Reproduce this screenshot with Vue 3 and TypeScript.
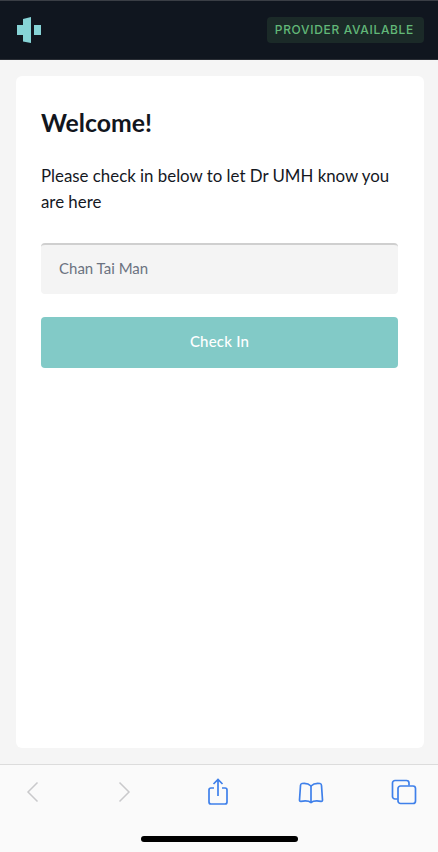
<template>
  <div class="page">
    <header class="topbar">
      <svg class="logo" width="26" height="28" viewBox="0 0 26 28">
        <path d="M15 1 L7 3 V9 H1 V19 H7 V25.500 L15 27 Z" fill="#86d3d6" />
        <rect x="18" y="9" width="7" height="10" fill="#86d3d6" />
      </svg>
      <span class="status">PROVIDER AVAILABLE</span>
    </header>

    <main class="content">
      <section class="card">
        <h1 class="title">Welcome!</h1>
        <p class="intro">Please check in below to let Dr UMH know you are here</p>
        <div class="name-input">{{ patientName }}</div>
        <button class="check-in" type="button">Check In</button>
      </section>
    </main>

    <footer class="toolbar">
      <div class="tools">
        <svg width="26" height="26" viewBox="0 0 26 26" fill="none" stroke="#c9c9cb" stroke-width="1.5">
          <path d="M18.500 3.500 L9 13 L18.500 22.500" />
        </svg>
        <svg width="26" height="26" viewBox="0 0 26 26" fill="none" stroke="#c9c9cb" stroke-width="1.5">
          <path d="M7.500 3.500 L17 13 L7.500 22.500" />
        </svg>
        <svg width="26" height="28" viewBox="0 0 26 28" fill="none" stroke="#3f80ea" stroke-width="1.7">
          <path d="M9 10 H6 a2 2 0 0 0 -2 2 V24 a2 2 0 0 0 2 2 H20 a2 2 0 0 0 2 -2 V12 a2 2 0 0 0 -2 -2 H17" />
          <path d="M13 18 V2 M8.500 6 L13 1.500 L17.500 6" />
        </svg>
        <svg width="26" height="24" viewBox="0 0 26 24" fill="none" stroke="#3f80ea" stroke-width="1.7">
          <path d="M13 6 C11 4 7 3 4 3.500 Q2.500 3.800 2.500 5.500 L1.500 20 Q1.500 21.500 3 21.300 C7 20.700 11 20.800 13 22.500 C15 20.800 19 20.700 23 21.300 Q24.500 21.500 24.500 20 L23.500 5.500 Q23.500 3.800 22 3.500 C19 3 15 4 13 6 Z" />
          <path d="M13 6 V22.500" />
        </svg>
        <svg width="26" height="26" viewBox="0 0 26 26" fill="none" stroke="#3f80ea" stroke-width="1.7">
          <path d="M6.500 20 H4 a2.500 2.500 0 0 1 -2.500 -2.500 V4 a2.500 2.500 0 0 1 2.500 -2.500 H15.500 a2.500 2.500 0 0 1 2.500 2.500 V6.500" />
          <rect x="7" y="7" width="17.500" height="17.500" rx="2.500" />
        </svg>
      </div>
      <div class="home-bar"></div>
    </footer>
  </div>
</template>

<script setup lang="ts">
const patientName = 'Chan Tai Man'
</script>

<style>
body {
  background: #f5f5f5;
}
</style>

<style scoped>
.page {
  display: flex;
  flex-direction: column;
  height: 852px;
  font-family: Lato, "Open Sans", sans-serif;
  background: #f5f5f5;
}

.topbar {
  display: flex;
  align-items: center;
  justify-content: space-between;
  box-sizing: border-box;
  height: 60px;
  padding: 0 14px 0 16px;
  background: #10161f;
  border-top: 1px solid #3a3e45;
  border-bottom: 1px solid #2a2e35;
}

.logo {
  display: block;
}

.status {
  padding: 0 10px 0 8px;
  height: 26px;
  line-height: 26px;
  font-family: Inter, sans-serif;
  font-size: 12px;
  font-weight: 500;
  letter-spacing: 0.67px;
  color: #62b878;
  background: #1b2a28;
  border-radius: 4px;
}

.content {
  flex: 1;
  display: flex;
  padding: 16px 14px 16px 16px;
  min-height: 0;
}

.card {
  flex: 1;
  box-sizing: border-box;
  padding: 32px 26px 30px 25px;
  background: #fff;
  border-radius: 6px;
}

.title {
  margin: 0;
  font-size: 24.800px;
  line-height: 30px;
  font-weight: 700;
  color: #12161d;
}

.intro {
  margin: 25px 0 0;
  font-size: 16.850px;
  line-height: 26px;
  color: #14181f;
}

.name-input {
  box-sizing: border-box;
  height: 51px;
  margin-top: 28px;
  padding-left: 18px;
  line-height: 47px;
  font-size: 15px;
  color: #6b7280;
  background: #f4f4f4;
  border-top: 2px solid #cfcfcf;
  border-radius: 4px;
}

.check-in {
  display: block;
  width: 100%;
  height: 51px;
  margin-top: 23px;
  padding: 0 0 3px;
  font-family: inherit;
  font-size: 15px;
  font-weight: 500;
  letter-spacing: 0.2px;
  color: #fff;
  background: #82cac7;
  border: none;
  border-radius: 4px;
}

.toolbar {
  box-sizing: border-box;
  height: 88px;
  background: #fafafa;
  border-top: 1px solid #dcdcdc;
}

.tools {
  display: flex;
  align-items: center;
  justify-content: space-between;
  height: 54px;
  padding: 0 21px 0 19px;
}

.home-bar {
  width: 157px;
  height: 6px;
  margin: 17px auto 0;
  background: #000;
  border-radius: 3px;
}
</style>
